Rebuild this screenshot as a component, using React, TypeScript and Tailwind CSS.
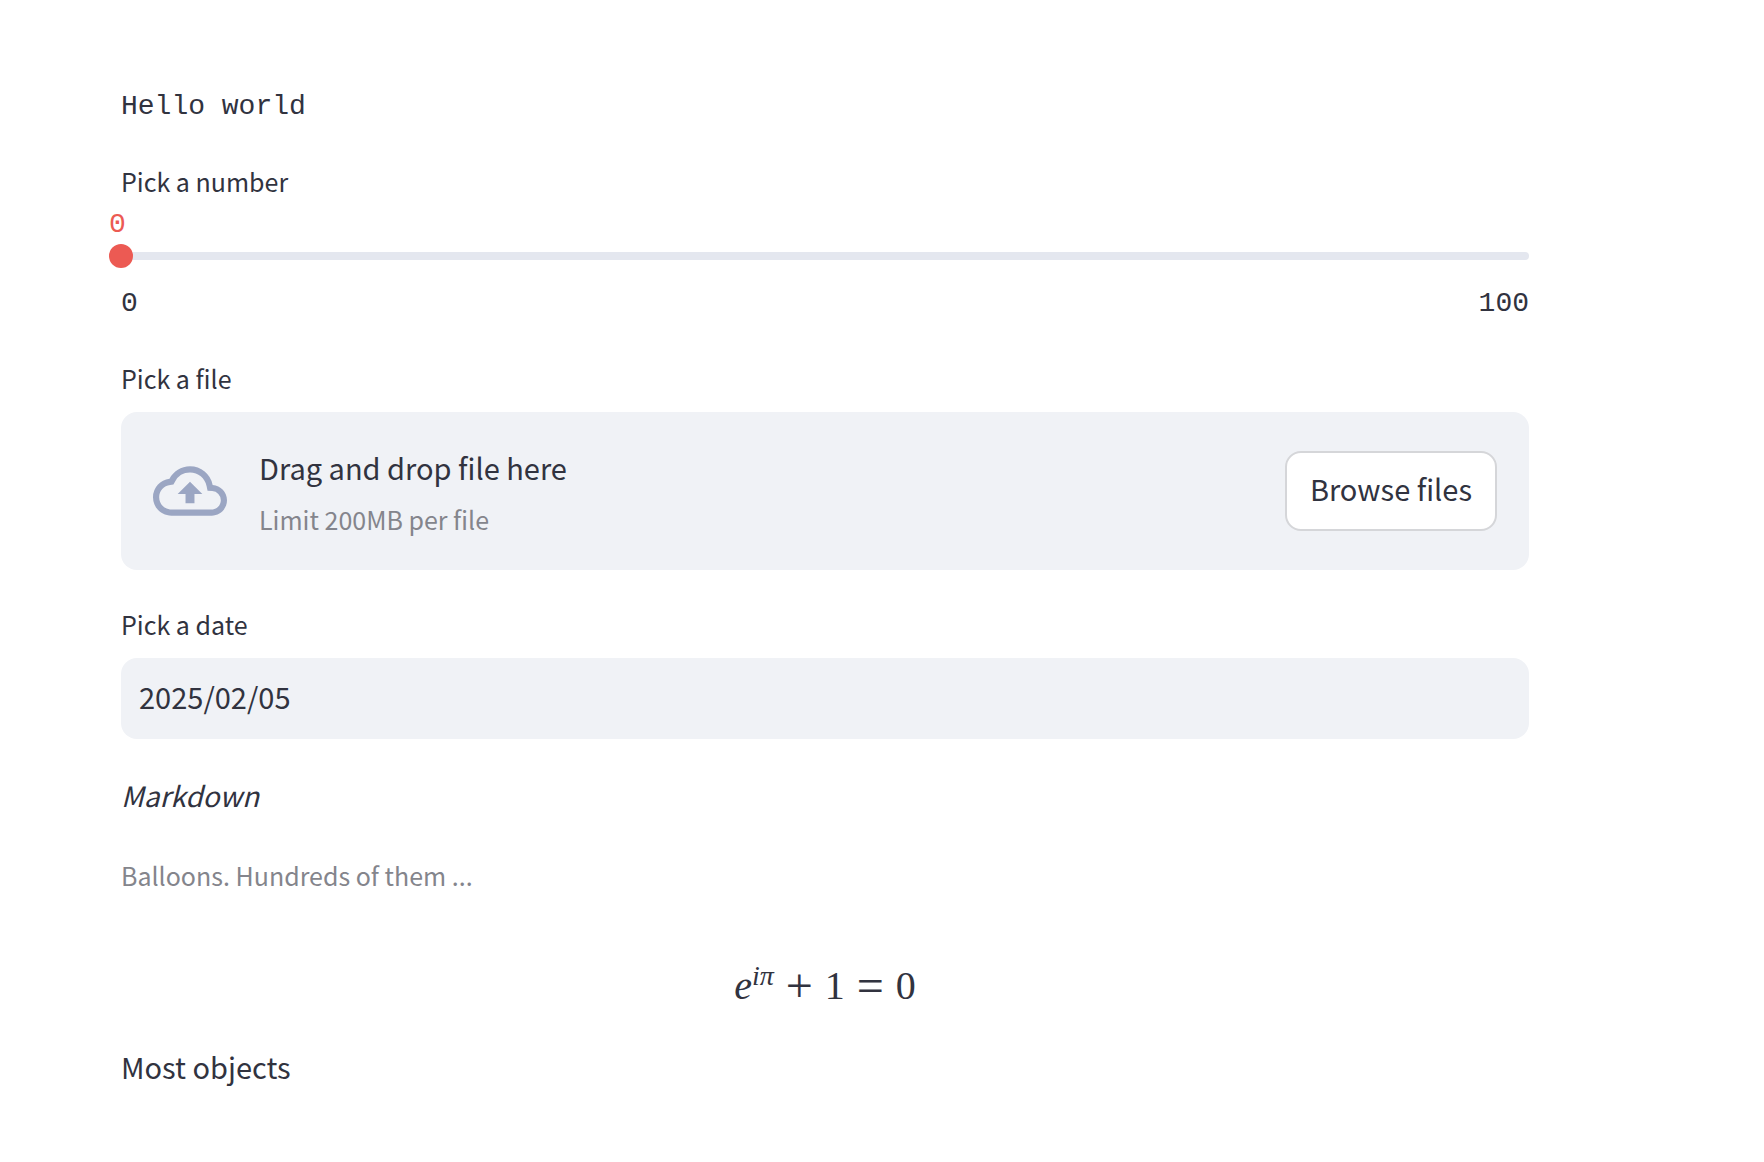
import { useRef, useState } from "react";

const SMALL = "text-[25px] leading-10";
const BODY = "text-[29px] leading-12";
const MONO = "font-['Liberation_Mono',monospace]";

function CloudUploadIcon() {
  return (
    <svg viewBox="0 0 24 24" className="size-[74px] shrink-0 fill-[#9ba6c3]" aria-hidden="true">
      <path d="M19.35 10.04A7.49 7.49 0 0 0 12 4C9.11 4 6.6 5.64 5.35 8.04A5.994 5.994 0 0 0 0 14c0 3.31 2.69 6 6 6h13c2.76 0 5-2.24 5-5 0-2.64-2.05-4.78-4.65-4.96zM19 18H6c-2.21 0-4-1.79-4-4 0-2.05 1.53-3.76 3.56-3.97l1.07-.11.5-.95A5.469 5.469 0 0 1 12 6c2.62 0 4.88 1.86 5.39 4.43l.3 1.5 1.53.11A2.98 2.98 0 0 1 22 15c0 1.65-1.35 3-3 3zM8 13h2.55v3h2.9v-3H16l-4-4z" />
    </svg>
  );
}

function NumberSlider() {
  const [value, setValue] = useState(0);
  return (
    <div>
      <label htmlFor="number" className={`block ${SMALL}`}>
        Pick a number
      </label>
      <div className={`mt-2 mb-[3px] h-8 text-[28px] leading-8 text-[#ec5a53] ${MONO}`}>
        <output htmlFor="number" className="relative -ml-3 block w-fit" style={{ left: `${value}%` }}>
          {value}
        </output>
      </div>
      <div className="relative flex h-6 items-center">
        <div className="h-2 w-full rounded-full bg-[#e4e7ef]" />
        <input
          id="number"
          type="range"
          min={0}
          max={100}
          value={value}
          onChange={(e) => setValue(Number(e.target.value))}
          className="absolute inset-y-0 -left-3 w-[calc(100%+24px)] cursor-pointer appearance-none bg-transparent outline-none [&::-webkit-slider-thumb]:size-6 [&::-webkit-slider-thumb]:appearance-none [&::-webkit-slider-thumb]:rounded-full [&::-webkit-slider-thumb]:bg-[#ec5a53]"
        />
      </div>
      <div className={`mt-4 flex justify-between text-[28px] leading-10 ${MONO}`}>
        <span>0</span>
        <span>100</span>
      </div>
    </div>
  );
}

function FilePicker() {
  const input = useRef<HTMLInputElement>(null);
  return (
    <div>
      <label htmlFor="file" className={`block ${SMALL}`}>
        Pick a file
      </label>
      <div className="mt-3.5 flex items-center gap-8 rounded-2xl bg-[#f0f2f6] px-8 py-[31px]">
        <CloudUploadIcon />
        <div className="grow">
          <div className={BODY}>Drag and drop file here</div>
          <div className={`mt-2 text-[#84858c] ${SMALL}`}>Limit 200MB per file</div>
        </div>
        <input ref={input} id="file" type="file" className="hidden" />
        <button
          type="button"
          onClick={() => input.current?.click()}
          className={`flex h-20 items-center rounded-2xl border-2 border-[#d5d6d9] bg-white px-[23px] pb-1.5 ${BODY}`}
        >
          Browse files
        </button>
      </div>
    </div>
  );
}

function DatePicker() {
  return (
    <div>
      <label htmlFor="date" className={`block ${SMALL}`}>
        Pick a date
      </label>
      <input
        id="date"
        type="text"
        defaultValue="2025/02/05"
        className={`mt-3.5 block h-[81px] w-full rounded-2xl bg-[#f0f2f6] px-[18px] pb-1.5 outline-none ${BODY}`}
      />
    </div>
  );
}

function Formula() {
  return (
    <div className="mt-[59px] flex items-center justify-center gap-3 font-['Liberation_Serif',serif] text-[40px] leading-16">
      <span>
        <i>e</i>
        <sup className="text-[28px] leading-none italic">iπ</sup>
      </span>
      <span className="text-[48px]">+</span>
      <span>1</span>
      <span className="text-[48px]">=</span>
      <span>0</span>
    </div>
  );
}

export default function App() {
  return (
    <main className="min-h-screen bg-white pt-[87px] pr-[235px] pb-[71px] pl-[121px] font-['Noto_Sans_CJK_SC',sans-serif] text-[#31333f]">
      <div className={`text-[28px] leading-10 ${MONO}`}>Hello world</div>
      <div className="mt-[34px] flex flex-col gap-[34px]">
        <NumberSlider />
        <FilePicker />
        <DatePicker />
      </div>
      <p className="mt-8 text-[28px] leading-12 italic">Markdown</p>
      <p className={`mt-9 text-[#84858c] ${SMALL}`}>Balloons. Hundreds of them ...</p>
      <Formula />
      <p className={`mt-6 ${BODY}`}>Most objects</p>
    </main>
  );
}
